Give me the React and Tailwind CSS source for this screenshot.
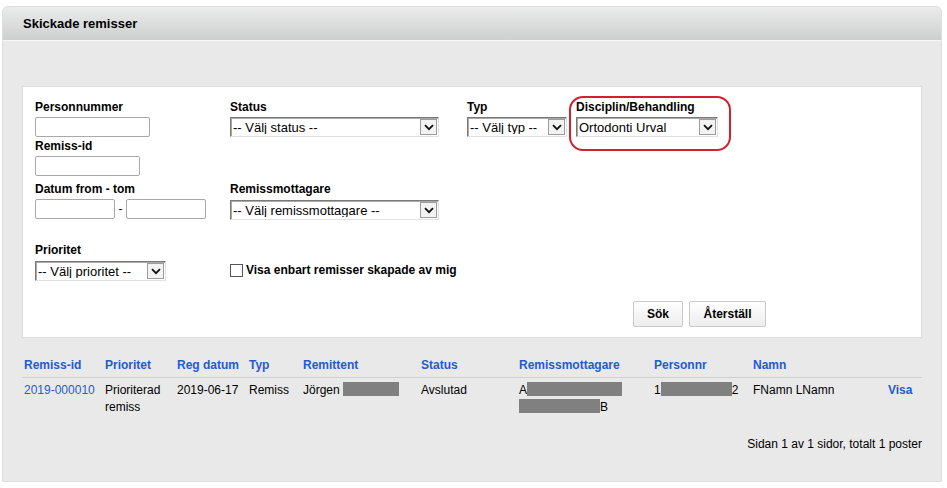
import React from 'react'

const font = { fontFamily: '"Liberation Sans", Arial, sans-serif' }

function Chevron() {
  return (
    <svg width="10" height="7" viewBox="0 0 10 7">
      <path d="M1 1.2 L5 5.2 L9 1.2" fill="none" stroke="#111" strokeWidth="1.8" />
    </svg>
  )
}

// fake old-school select
function Select({ label, w }) {
  return (
    <div
      className={`${w} h-[20px] flex items-center bg-white border border-t-[#7a7a7a] border-l-[#7a7a7a] border-b-[#e2e2e2] border-r-[#e2e2e2] shadow-[inset_1px_1px_0_#a8a8a8]`}
    >
      <span className="flex-1 pl-[2px] text-[13px] leading-none text-black whitespace-nowrap overflow-hidden">{label}</span>
      <span className="w-[17px] h-[16px] mr-[1px] flex items-center justify-center bg-[#f3f3f3] border border-[#9c9c9c]">
        <Chevron />
      </span>
    </div>
  )
}

function Input({ w }) {
  return <div className={`${w} h-[20px] bg-white border border-[#a9a9a9] rounded-[2px]`} />
}

function Label({ children, className = '' }) {
  return <div className={`h-[14px] text-[12px] leading-[14px] font-bold text-black whitespace-nowrap ${className}`}>{children}</div>
}

function Gray({ w }) {
  return <span className={`inline-block ${w} h-[14px] bg-[#808080] align-[-2px]`} />
}

const COLS = 'grid grid-cols-[81px_72px_72px_54px_118px_98px_135px_99px_135px_33px]'
const HEADERS = ['Remiss-id', 'Prioritet', 'Reg datum', 'Typ', 'Remittent', 'Status', 'Remissmottagare', 'Personnr', 'Namn', '']

export default function App() {
  return (
    <div className="w-[947px] h-[488px] bg-white pt-[6px] pl-[2px]" style={font}>
      <div className="w-[940px] h-[476px] rounded-t-[6px] border border-[#dedede] bg-[#e9e9e9] flex flex-col">
        {/* header */}
        <div className="h-[34px] rounded-t-[6px] bg-gradient-to-b from-[#ececec] to-[#cdcfcf] border-b border-[#f6f6f6] pl-[20px] flex items-center">
          <h1 className="text-[13px] font-bold text-black">Skickade remisser</h1>
        </div>

        <div className="pl-[19px] pr-[19px] pt-[45px]">
          {/* filter box */}
          <div className="relative w-[900px] bg-white border border-[#dcdcdc] pl-[12px] pt-[13px] pb-[10px]">
            <div className="flex">
              {/* col 1 */}
              <div className="w-[195px] flex flex-col">
                <Label>Personnummer</Label>
                <div className="mt-[3px]"><Input w="w-[115px]" /></div>
                <Label className="mt-[2px]">Remiss-id</Label>
                <div className="mt-[3px]"><Input w="w-[105px]" /></div>
                <Label className="mt-[6px]">Datum from - tom</Label>
                <div className="mt-[3px] flex items-center">
                  <Input w="w-[80px]" />
                  <span className="w-[11px] text-center text-[12px]">-</span>
                  <Input w="w-[80px]" />
                </div>
                <Label className="mt-[24px]">Prioritet</Label>
                <div className="mt-[4px]"><Select label="-- Välj prioritet --" w="w-[131px]" /></div>
              </div>

              {/* col 2 */}
              <div className="w-[237px] flex flex-col">
                <Label>Status</Label>
                <div className="mt-[3px]"><Select label="-- Välj status --" w="w-[209px]" /></div>
                <Label className="mt-[45px]">Remissmottagare</Label>
                <div className="mt-[4px]"><Select label="-- Välj remissmottagare --" w="w-[209px]" /></div>
                <div className="mt-[41px] flex items-center gap-[3px]">
                  <span className="w-[13px] h-[13px] bg-white border border-[#555]" />
                  <span className="text-[12px] font-bold text-black">Visa enbart remisser skapade av mig</span>
                </div>
              </div>

              {/* col 3 */}
              <div className="w-[109px] flex flex-col">
                <Label>Typ</Label>
                <div className="mt-[3px]"><Select label="-- Välj typ --" w="w-[100px]" /></div>
              </div>

              {/* col 4 */}
              <div className="flex flex-col">
                <Label>Disciplin/Behandling</Label>
                <div className="mt-[3px]"><Select label="Ortodonti Urval" w="w-[142px]" /></div>
              </div>
            </div>

            <div className="mt-[20px] flex justify-end pr-[155px] gap-[6px]">
              <button className="w-[50px] h-[26px] rounded-[2px] border border-[#c9c9c9] bg-gradient-to-b from-white to-[#ededed] text-[12px] font-bold text-black">Sök</button>
              <button className="w-[77px] h-[26px] rounded-[2px] border border-[#c9c9c9] bg-gradient-to-b from-white to-[#ededed] text-[12px] font-bold text-black">Återställ</button>
            </div>

            {/* annotation */}
            <div className="absolute left-[546px] top-[9px] w-[162px] h-[55px] rounded-[14px] border-2 border-[#d2202e]" />
          </div>

          {/* result table */}
          <div className="mt-[20px] w-[900px]">
            <div className={`${COLS} pl-[2px] h-[20px] items-start border-b border-[#cfcfcf]`}>
              {HEADERS.map((h, i) => (
                <span key={i} className="text-[12px] leading-[14px] font-bold text-[#1f5bd3] whitespace-nowrap">{h}</span>
              ))}
            </div>
            <div className={`${COLS} pl-[2px] pt-[4px] text-[12px] leading-[17px] text-black`}>
              <span className="text-[#1f5bd3]">2019-000010</span>
              <span>Prioriterad<br />remiss</span>
              <span>2019-06-17</span>
              <span>Remiss</span>
              <span className="whitespace-nowrap">Jörgen <Gray w="w-[56px]" /></span>
              <span>Avslutad</span>
              <span className="whitespace-nowrap">A<Gray w="w-[95px]" /><br /><Gray w="w-[81px]" />B</span>
              <span className="whitespace-nowrap">1<Gray w="w-[71px]" />2</span>
              <span className="whitespace-nowrap">FNamn LNamn</span>
              <span className="font-bold text-[#1f5bd3]">Visa</span>
            </div>
            <div className="mt-[19px] text-right text-[12px] text-black">Sidan 1 av 1 sidor, totalt 1 poster</div>
          </div>
        </div>
      </div>
    </div>
  )
}
